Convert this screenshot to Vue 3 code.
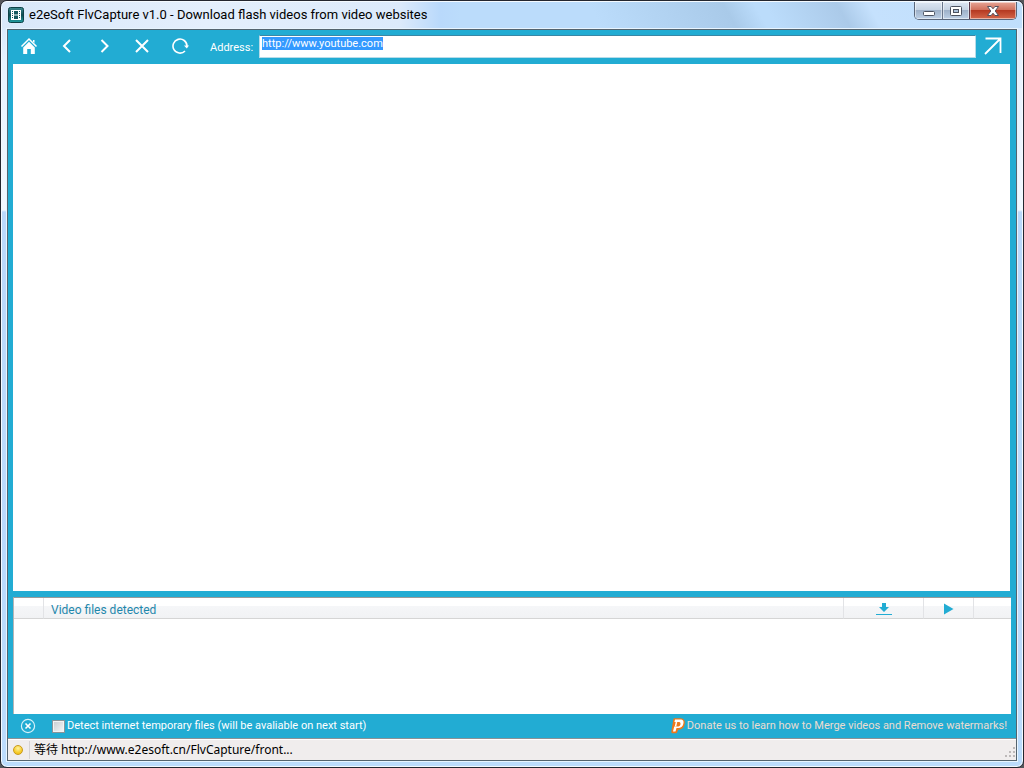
<template>
  <div class="window">
    <header class="titlebar">
      <svg class="app-icon" viewBox="0 0 16 16">
        <defs>
          <linearGradient id="appFill" x1="0" y1="0" x2="0" y2="1">
            <stop offset="0" stop-color="#3d8b91" />
            <stop offset="0.5" stop-color="#0f4a50" />
            <stop offset="1" stop-color="#22a0a4" />
          </linearGradient>
        </defs>
        <rect x="0.5" y="0.5" width="15" height="15" rx="2" fill="url(#appFill)" stroke="#0d4247" />
        <path d="M3 3h10v10H3z" fill="#fff" />
        <path d="M6 4h4v3.500H6zM6 8.500h4V12H6zM4 4h1v1H4zM4 6h1v1H4zM4 8h1v1H4zM4 10h1v1H4zM11 4h1v1h-1zM11 6h1v1h-1zM11 8h1v1h-1zM11 10h1v1h-1z" fill="#14565c" />
      </svg>
      <h1 class="title">{{ title }}</h1>
      <div class="window-buttons">
        <button class="win-btn minimize" aria-label="Minimize">
          <svg width="14" height="12" viewBox="0 0 14 12">
            <rect x="1.5" y="6.5" width="11" height="4" rx="1" fill="#fff" stroke="#4b5260" />
          </svg>
        </button>
        <button class="win-btn maximize" aria-label="Maximize">
          <svg width="14" height="12" viewBox="0 0 14 12">
            <rect x="1.5" y="1.5" width="11" height="9" rx="1" fill="#fff" stroke="#4b5260" />
            <rect x="4.5" y="4.5" width="5" height="3" fill="#a9bfd9" stroke="#4b5260" />
          </svg>
        </button>
        <button class="win-btn close" aria-label="Close">
          <svg width="14" height="12" viewBox="0 0 14 12">
            <path d="M1.500 1.500h3.600L7 3.800l1.900-2.300h3.600L9.200 6l3.300 4.500H8.900L7 8.200l-1.900 2.300H1.500L4.800 6z" fill="#fff" stroke="#54505c" stroke-linejoin="round" />
          </svg>
        </button>
      </div>
    </header>

    <main class="client">
      <form class="toolbar" @submit.prevent="navigate">
        <button type="button" class="tool" aria-label="Home" @click="goHome">
          <svg width="18" height="18" viewBox="0 0 18 18">
            <path d="M1.500 9.500L9 2l7.500 7.500" fill="none" stroke="#fff" stroke-width="1.500" />
            <path d="M13 3h1.500v3L13 4.500z" fill="#fff" />
            <path d="M9 4.800L3.200 10.500V17h4v-5h3.600v5h4v-6.500z" fill="#fff" />
          </svg>
        </button>
        <button type="button" class="tool" aria-label="Back">
          <svg width="18" height="18" viewBox="0 0 18 18">
            <path d="M12 3L6 9l6 6" fill="none" stroke="#fff" stroke-width="2" />
          </svg>
        </button>
        <button type="button" class="tool" aria-label="Forward">
          <svg width="18" height="18" viewBox="0 0 18 18">
            <path d="M5.500 3l6 6-6 6" fill="none" stroke="#fff" stroke-width="2" />
          </svg>
        </button>
        <button type="button" class="tool" aria-label="Stop">
          <svg width="18" height="18" viewBox="0 0 18 18">
            <path d="M2 3l12 12M14 3L2 15" fill="none" stroke="#fff" stroke-width="2" />
          </svg>
        </button>
        <button type="button" class="tool" aria-label="Refresh">
          <svg width="18" height="18" viewBox="0 0 18 18">
            <path d="M13 14A7 7 0 1 1 15 9" fill="none" stroke="#fff" stroke-width="1.600" />
            <path d="M12 8.500h5L14.800 11.500z" fill="#fff" />
          </svg>
        </button>
        <label for="address" class="address-label">Address:</label>
        <input id="address" ref="addressBox" v-model="address" class="address" type="text" spellcheck="false" />
        <button type="submit" class="go" aria-label="Go">
          <svg width="18" height="18" viewBox="0 0 18 18">
            <path d="M1 17L16 2M1.500 1.500h15V16" fill="none" stroke="#fff" stroke-width="1.800" />
          </svg>
        </button>
      </form>

      <section class="browser"></section>

      <section class="detected">
        <table class="files">
          <thead>
            <tr>
              <th class="col-check"></th>
              <th class="col-name">Video files detected</th>
              <th class="col-download">
                <svg width="16" height="14" viewBox="0 0 16 14">
                  <path d="M6 1h4v4h3L8 10 3 5h3z" fill="#22acd3" />
                  <path d="M0 12.500h16" stroke="#22acd3" />
                </svg>
              </th>
              <th class="col-play">
                <svg width="10" height="12" viewBox="0 0 10 12">
                  <path d="M0 0.500L9.500 6 0 11.500z" fill="#22acd3" />
                </svg>
              </th>
              <th class="col-last"></th>
            </tr>
          </thead>
          <tbody></tbody>
        </table>
      </section>

      <footer class="options">
        <button class="clear" aria-label="Clear list">
          <svg width="16" height="16" viewBox="0 0 16 16">
            <circle cx="8" cy="8" r="6.600" fill="none" stroke="#d5f1f9" stroke-width="1.200" />
            <path d="M5.500 5.500l5 5M10.500 5.500l-5 5" stroke="#fff" stroke-width="1.600" />
          </svg>
        </button>
        <input id="detect" v-model="detectTemp" class="detect-box" type="checkbox" />
        <label for="detect" class="detect-label">Detect internet temporary files (will be avaliable on next start)</label>
        <a href="#" class="donate">
          <svg width="14" height="16" viewBox="0 0 14 16">
            <path d="M3.500 1.500h6c3 0 3.500 2 3 4.500S10 10.500 7.500 10.500H6.200L5 14H1.500z" fill="#f07818" stroke="#f07818" stroke-width="2.400" stroke-linejoin="round" />
            <path d="M4 1.500h5c3.500 0 4 2 3.300 4.500S10 10 7 10H5.500L4.500 13.500H2L3.200 8.500h4c2.800 0 3-4.500 1-4.500H3.400z" fill="#fff" />
            <path d="M5.500 4l-1 4.500" fill="none" stroke="#fff" stroke-width="1.500" />
          </svg>
          <span>Donate us to learn how to Merge videos and Remove watermarks!</span>
        </a>
      </footer>

      <div class="statusbar">
        <span class="status-light"><i class="lamp"></i></span>
        <span class="status-text">{{ status }}</span>
        <svg class="grip" width="11" height="11" viewBox="0 0 11 11">
          <path d="M8 0h2v2H8zM4 4h2v2H4zM8 4h2v2H8zM0 8h2v2H0zM4 8h2v2H4zM8 8h2v2H8z" fill="#bdb9b9" />
        </svg>
      </div>
    </main>
  </div>
</template>

<script setup>
import { ref, onMounted } from 'vue'

const title = 'e2eSoft FlvCapture v1.0 - Download flash videos from video websites'
const home = 'http://www.youtube.com'

const address = ref(home)
const addressBox = ref(null)
const detectTemp = ref(false)
const status = ref('等待 http://www.e2esoft.cn/FlvCapture/front...')

onMounted(() => {
  addressBox.value.focus()
  addressBox.value.select()
})

function goHome() {
  address.value = home
  navigate()
}

function navigate() {
  status.value = '等待 ' + address.value
}
</script>

<style>
body {
  margin: 0;
  background: #55565b;
}
</style>

<style scoped>
* {
  box-sizing: border-box;
}

button {
  padding: 0;
  border: none;
  background: none;
}

svg {
  display: block;
}

.window {
  height: 100vh;
  display: flex;
  flex-direction: column;
  padding: 0 6px 6px;
  border: 1px solid #23262f;
  border-radius: 7px;
  box-shadow: inset 0 0 0 1px #f4faff;
  background: linear-gradient(180deg, #cfe3fa 0, #e6f2fe 60px, #f2f8ff 209px, #bbd9fb 211px, #bcdcfc 100%);
  font-family: "Noto Sans", "Noto Sans CJK SC", sans-serif;
}

.titlebar {
  height: 27px;
  flex: none;
  display: flex;
  align-items: center;
  margin: 0 -5px;
  padding: 0 5px 0 6px;
  border-top: 1px solid #f4faff;
  border-radius: 6px 6px 0 0;
  background:
    linear-gradient(90deg, #d9e8fa 0%, #e4effc 20%, #dceafb 39%, #b9d9fb 43%, transparent 45%),
    linear-gradient(60deg, #bbdcfb 58%, #a9cae9 71%, #bbdcfb 74%, #bbdcfb 75%, #abcae9 82%, #c5e1fd 85%, #bfdefb 100%);
}

.app-icon {
  width: 16px;
  height: 16px;
}

.title {
  margin: 0 0 0 5px;
  flex: 1;
  font-family: Roboto, sans-serif;
  font-size: 13px;
  line-height: 16px;
  font-weight: normal;
  color: #000;
}

.window-buttons {
  display: flex;
  align-self: flex-start;
  height: 18px;
  border: 1px solid #59667a;
  border-top: none;
  border-radius: 0 0 5px 5px;
  overflow: hidden;
}

.win-btn {
  width: 27px;
  display: flex;
  align-items: center;
  justify-content: center;
  background: linear-gradient(180deg, #dce6f2 0%, #c5d2e2 48%, #9eb1c9 50%, #bdd0e6 100%);
  box-shadow: inset 0 0 0 1px rgba(255, 255, 255, 0.5);
}

.maximize {
  border-left: 1px solid #69768b;
}

.close {
  width: 47px;
  border-left: 1px solid #59384a;
  background: linear-gradient(180deg, #e6a596 0%, #d0705c 46%, #b53a22 50%, #d5674a 100%);
}

.client {
  flex: 1;
  min-height: 0;
  display: flex;
  flex-direction: column;
  border: 1px solid #54646f;
  outline: 1px solid #e8f5ff;
  margin: 1px 0 0;
  background: #22acd3;
}

.toolbar {
  height: 34px;
  flex: none;
  display: flex;
  align-items: center;
  padding: 0 14px 2px 12px;
  color: #fff;
}

.tool {
  width: 18px;
  height: 18px;
  margin-right: 20px;
}

.tool svg {
  margin: 0 auto;
}

.address-label {
  margin: 3px 6px 0 0;
  font-family: Roboto, sans-serif;
  font-size: 11px;
  line-height: 16px;
}

.address {
  flex: 1;
  min-width: 0;
  height: 23px;
  margin: 1px 8px 0 0;
  padding: 1px 2px 7px;
  border: 1px solid #b7dce9;
  border-top-color: #3a87a5;
  outline: none;
  background: #fff;
  font-family: Roboto, sans-serif;
  font-size: 11px;
  line-height: 13px;
  color: #222;
}

.address::selection {
  background: #3399ff;
  color: #fff;
}

.go {
  width: 18px;
  height: 18px;
}

.browser {
  flex: 1;
  min-height: 0;
  margin: 0 6px 0 5px;
  background: #fff;
}

.detected {
  height: 117px;
  flex: none;
  margin: 6px 5px 0 5px;
  border-top: 1px solid #9a9a9a;
  border-left: 1px solid #b5b5b5;
  background: #fff;
}

.files {
  width: 100%;
  table-layout: fixed;
  border-collapse: separate;
  border-spacing: 0;
}

.files th {
  height: 21px;
  padding: 1px 0 0;
  border-right: 1px solid #e2e3e6;
  border-bottom: 1px solid #d5d5d5;
  background: linear-gradient(180deg, #fff 0%, #fff 40%, #f5f6f8 42%, #f1f2f4 100%);
  font-family: Roboto, sans-serif;
  font-size: 12px;
  line-height: 16px;
  font-weight: normal;
  text-align: left;
  color: #1f87ac;
}

.files svg {
  margin: 0 auto;
}

.col-check {
  width: 30px;
}

.files .col-name {
  padding: 3px 0 0 7px;
}

.col-download {
  width: 80px;
}

.col-play {
  width: 50px;
}

.files .col-last {
  width: 37px;
  border-right: none;
}

.options {
  height: 24px;
  flex: none;
  display: flex;
  align-items: center;
  padding: 0 9px 0 12px;
  font-family: Roboto, sans-serif;
  font-size: 11px;
  line-height: 16px;
  color: #fff;
}

.clear {
  width: 16px;
  height: 16px;
}

.detect-box {
  appearance: none;
  width: 13px;
  height: 13px;
  margin: 0 2px 0 16px;
  border: 1px solid #8a9499;
  background: linear-gradient(135deg, #c8ccd0, #f8f8f8);
  box-shadow: inset 0 0 0 1px #f4f4f4;
}

.detect-box:checked {
  background: #2f5f8a;
}

.donate {
  display: flex;
  align-items: center;
  gap: 2px;
  margin-left: auto;
  color: #ecdcd0;
  text-decoration: none;
}

.donate svg {
  overflow: visible;
}

.statusbar {
  height: 22px;
  flex: none;
  display: flex;
  align-items: center;
  border-top: 1px solid #8b9296;
  box-shadow: inset 0 1px 0 #fff;
  background: #f0eded;
  font-size: 12px;
  line-height: 18px;
  color: #000;
}

.status-light {
  width: 22px;
  height: 18px;
  padding: 4px 0 0 5px;
  border-right: 1px solid #d5d2d2;
}

.lamp {
  display: block;
  width: 10px;
  height: 10px;
  border: 1px solid #c99a1c;
  border-radius: 50%;
  background: radial-gradient(circle at 50% 30%, #fff3a0, #f7cc2c 60%, #efb70c);
}

.status-text {
  margin-left: 4px;
}

.grip {
  margin: auto 0 2px auto;
}
</style>
